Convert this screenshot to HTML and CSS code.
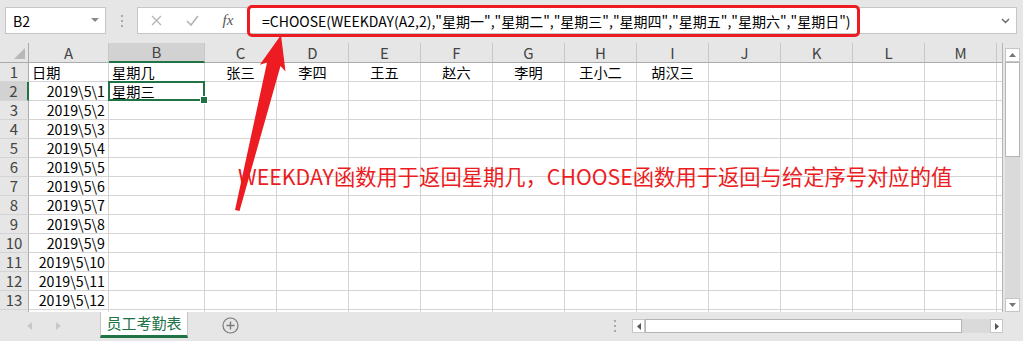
FILE: index.html
```html
<!DOCTYPE html>
<html lang="zh-CN">
<head>
  <meta charset="UTF-8">
  <title>员工考勤表</title>
  <link rel="stylesheet" href="styles.css">
</head>
<body>
  <div class="app">
    <div class="toolbar">
      <div class="name-box">
        <span>B2</span>
        <svg width="8" height="5" viewBox="0 0 8 5"><path d="M0 0h8L4 4z" fill="#8a8a8a"/></svg>
      </div>
      <div class="grip"><i></i><i></i><i></i></div>
      <div class="formula-bar">
        <div class="fx-btn">
          <svg width="11" height="11" viewBox="0 0 11 11"><path d="M1 1l9 9M10 1l-9 9" stroke="#b4b4b4" stroke-width="1.3" fill="none"/></svg>
        </div>
        <div class="fx-btn">
          <svg width="13" height="11" viewBox="0 0 13 11"><path d="M1 6l4 4 7-9" stroke="#b4b4b4" stroke-width="1.6" fill="none"/></svg>
        </div>
        <div class="fx-btn"><span class="fx">fx</span></div>
        <div class="formula-text">=CHOOSE(WEEKDAY(A2,2),"星期一","星期二","星期三","星期四","星期五","星期六","星期日")</div>
        <svg class="chevron" width="9" height="6" viewBox="0 0 9 6"><path d="M1 1l3.5 3.5L8 1" stroke="#666" stroke-width="1.4" fill="none"/></svg>
      </div>
    </div>

    <div class="main">
      <div class="sheet">
        <table class="grid">
          <colgroup>
            <col class="c-head"><col class="c-a"><col class="c-b">
            <col><col><col><col><col><col><col><col><col><col><col><col>
          </colgroup>
          <tr class="col-heads">
            <th class="corner"></th>
            <th>A</th><th class="sel-col">B</th><th>C</th><th>D</th><th>E</th><th>F</th><th>G</th>
            <th>H</th><th>I</th><th>J</th><th>K</th><th>L</th><th>M</th><th></th>
          </tr>
          <tr>
            <th>1</th><td class="left">日期</td><td class="left">星期几</td>
            <td>张三</td><td>李四</td><td>王五</td><td>赵六</td><td>李明</td><td>王小二</td><td>胡汉三</td>
            <td></td><td></td><td></td><td></td><td></td>
          </tr>
          <tr>
            <th class="sel-row">2</th><td class="num">2019\5\1</td><td class="left active">星期三</td>
            <td></td><td></td><td></td><td></td><td></td><td></td><td></td><td></td><td></td><td></td><td></td><td></td>
          </tr>
          <tr><th>3</th><td class="num">2019\5\2</td><td></td><td></td><td></td><td></td><td></td><td></td><td></td><td></td><td></td><td></td><td></td><td></td><td></td></tr>
          <tr><th>4</th><td class="num">2019\5\3</td><td></td><td></td><td></td><td></td><td></td><td></td><td></td><td></td><td></td><td></td><td></td><td></td><td></td></tr>
          <tr><th>5</th><td class="num">2019\5\4</td><td></td><td></td><td></td><td></td><td></td><td></td><td></td><td></td><td></td><td></td><td></td><td></td><td></td></tr>
          <tr><th>6</th><td class="num">2019\5\5</td><td></td><td></td><td></td><td></td><td></td><td></td><td></td><td></td><td></td><td></td><td></td><td></td><td></td></tr>
          <tr><th>7</th><td class="num">2019\5\6</td><td></td><td></td><td></td><td></td><td></td><td></td><td></td><td></td><td></td><td></td><td></td><td></td><td></td></tr>
          <tr><th>8</th><td class="num">2019\5\7</td><td></td><td></td><td></td><td></td><td></td><td></td><td></td><td></td><td></td><td></td><td></td><td></td><td></td></tr>
          <tr><th>9</th><td class="num">2019\5\8</td><td></td><td></td><td></td><td></td><td></td><td></td><td></td><td></td><td></td><td></td><td></td><td></td><td></td></tr>
          <tr><th>10</th><td class="num">2019\5\9</td><td></td><td></td><td></td><td></td><td></td><td></td><td></td><td></td><td></td><td></td><td></td><td></td><td></td></tr>
          <tr><th>11</th><td class="num">2019\5\10</td><td></td><td></td><td></td><td></td><td></td><td></td><td></td><td></td><td></td><td></td><td></td><td></td><td></td></tr>
          <tr><th>12</th><td class="num">2019\5\11</td><td></td><td></td><td></td><td></td><td></td><td></td><td></td><td></td><td></td><td></td><td></td><td></td><td></td></tr>
          <tr><th>13</th><td class="num">2019\5\12</td><td></td><td></td><td></td><td></td><td></td><td></td><td></td><td></td><td></td><td></td><td></td><td></td><td></td></tr>
          <tr><th></th><td></td><td></td><td></td><td></td><td></td><td></td><td></td><td></td><td></td><td></td><td></td><td></td><td></td><td></td></tr>
        </table>
      </div>
      <div class="vscroll">
        <div class="sb-btn"><svg width="7" height="4" viewBox="0 0 7 4"><path d="M0 4h7L3.5 0z" fill="#777"/></svg></div>
        <div class="sb-thumb"></div>
        <div class="sb-track"></div>
        <div class="sb-btn"><svg width="7" height="4" viewBox="0 0 7 4"><path d="M0 0h7L3.5 4z" fill="#777"/></svg></div>
      </div>
    </div>

    <div class="tabbar">
      <div class="tab-nav">
        <svg width="5" height="8" viewBox="0 0 5 8"><path d="M5 0v8L0 4z" fill="#c8c8c8"/></svg>
        <svg width="5" height="8" viewBox="0 0 5 8"><path d="M0 0v8l5-4z" fill="#c8c8c8"/></svg>
      </div>
      <div class="tab">员工考勤表</div>
      <div class="add-sheet">
        <svg width="17" height="17" viewBox="0 0 17 17"><circle cx="8.5" cy="8.5" r="7.5" fill="none" stroke="#7a7a7a" stroke-width="1.2"/><path d="M8.5 4.5v8M4.5 8.5h8" stroke="#7a7a7a" stroke-width="1.4"/></svg>
      </div>
      <div class="grip grip-bottom"><i></i><i></i><i></i></div>
      <div class="hscroll">
        <div class="sb-btn"><svg width="4" height="7" viewBox="0 0 4 7"><path d="M4 0v7L0 3.5z" fill="#555"/></svg></div>
        <div class="sb-thumb"></div>
        <div class="sb-track"></div>
        <div class="sb-btn"><svg width="4" height="7" viewBox="0 0 4 7"><path d="M0 0v7l4-3.5z" fill="#555"/></svg></div>
      </div>
    </div>

    <!-- annotations drawn on top of the screenshot -->
    <div class="mark-box"></div>
    <svg class="mark-arrow" width="1023" height="341" viewBox="0 0 1023 341">
      <polygon points="281,35 285.5,71.5 280.5,66 239.5,211 235,210 267,62.5 259.8,64.8" fill="#ec1c22"/>
    </svg>
    <p class="mark-note">WEEKDAY函数用于返回星期几，CHOOSE函数用于返回与给定序号对应的值</p>
  </div>
</body>
</html>
```

FILE: styles.css
```css
:root {
  --green: #217346;
  --red: #ec1c22;
  --line: #d4d4d4;
  --head: #e6e6e6;
  --head-sel: #d2d2d2;
  --border: #c6c6c6;
  --font: "Noto Sans CJK SC", "Noto Sans", sans-serif;
}

* {
  box-sizing: border-box;
}

body {
  margin: 0;
  background: #e6e6e6;
  font-family: var(--font);
  color: #000;
}

.app {
  position: relative;
  width: 1023px;
  height: 341px;
  overflow: hidden;
  background: #e6e6e6;
}

/* formula bar row */
.toolbar {
  height: 43px;
  display: flex;
  align-items: flex-start;
  padding: 7px 6px 0 5px;
}

.name-box {
  width: 101px;
  height: 27px;
  background: #fff;
  border: 1px solid var(--border);
  display: flex;
  align-items: center;
  justify-content: space-between;
  padding: 0 6px 0 7px;
  font-size: 14px;
  line-height: 1;
}

.grip {
  width: 31px;
  height: 27px;
  display: flex;
  flex-direction: column;
  align-items: center;
  justify-content: center;
  gap: 3px;
}

.grip i {
  width: 2px;
  height: 2px;
  background: #a8a8a8;
}

.formula-bar {
  flex: 1;
  height: 27px;
  background: #fff;
  border: 1px solid var(--border);
  display: flex;
  align-items: center;
}

.fx-btn {
  width: 36px;
  display: flex;
  justify-content: center;
  align-items: center;
}

.fx {
  font-family: "Liberation Serif", serif;
  font-style: italic;
  font-size: 15px;
  color: #555;
}

.formula-text {
  flex: 1;
  padding-left: 16px;
  font-size: 14px;
  white-space: nowrap;
}

.chevron {
  margin-right: 6px;
}

/* sheet */
.main {
  height: 269px;
  display: flex;
}

.sheet {
  width: 1003px;
  height: 269px;
  overflow: hidden;
  border-right: 1px solid #b4b4b4;
  background: #fff;
}

.grid {
  table-layout: fixed;
  border-collapse: separate;
  border-spacing: 0;
  width: 1069px;
  font-size: 14.2px;
}

.grid col {
  width: 72px;
}

.grid col.c-head {
  width: 29px;
}

.grid col.c-a {
  width: 80px;
}

.grid col.c-b {
  width: 96px;
}

.grid td,
.grid th {
  height: 19px;
  padding: 0 3px;
  border-right: 1px solid var(--line);
  border-bottom: 1px solid var(--line);
  line-height: 18px;
  white-space: nowrap;
  text-align: center;
}

.grid th {
  background: var(--head);
  font-weight: normal;
  font-size: 15px;
  color: #444;
  padding: 0;
  border-right-color: #ababab;
}

.col-heads th {
  height: 20px;
  line-height: 19px;
  border-right-color: #c8c8c8;
  border-bottom-color: #ababab;
}

.col-heads th.corner {
  position: relative;
  border-right-color: #ababab;
}

.corner::after {
  content: "";
  position: absolute;
  right: 3px;
  bottom: 3px;
  border-left: 11px solid transparent;
  border-bottom: 11px solid #b8b8b8;
}

.grid th.sel-col {
  background: var(--head-sel);
  border-bottom: 2px solid var(--green);
  line-height: 18px;
}

.grid th.sel-row {
  background: var(--head-sel);
  border-right: 2px solid var(--green);
}

.grid td.left {
  text-align: left;
}

.grid td.num {
  text-align: right;
}

.grid td.active {
  position: relative;
}

.active::before {
  content: "";
  position: absolute;
  left: -1px;
  top: -1px;
  right: -1px;
  bottom: -1px;
  border: 2px solid var(--green);
}

.active::after {
  content: "";
  position: absolute;
  right: -4px;
  bottom: -4px;
  width: 6px;
  height: 6px;
  background: var(--green);
  border: 1px solid #fff;
}

/* scrollbars */
.vscroll {
  width: 20px;
  padding: 5px 3px 0 2px;
  display: flex;
  flex-direction: column;
}

.sb-btn {
  flex: none;
  width: 15px;
  height: 14px;
  background: #fff;
  border: 1px solid var(--border);
  display: flex;
  align-items: center;
  justify-content: center;
}

.vscroll .sb-thumb {
  height: 95px;
  background: #fff;
  border: 1px solid #b4b4b4;
}

.sb-track {
  flex: 1;
  background: #dadada;
}

.tabbar {
  height: 29px;
  display: flex;
  align-items: flex-start;
  padding-right: 20px;
}

.tab-nav {
  width: 100px;
  height: 27px;
  display: flex;
  align-items: center;
  gap: 24px;
  padding-left: 27px;
}

.tab {
  width: 88px;
  height: 26px;
  background: #fff;
  border: 1px solid var(--border);
  border-top: none;
  border-bottom: 3px solid var(--green);
  color: var(--green);
  font-size: 15px;
  line-height: 22px;
  text-align: center;
}

.add-sheet {
  margin-left: 34px;
  height: 27px;
  display: flex;
  align-items: center;
}

.grip-bottom {
  margin-left: auto;
  width: 16px;
  height: 27px;
}

.hscroll {
  margin-left: 9px;
  margin-top: 7px;
  width: 371px;
  height: 14px;
  display: flex;
}

.hscroll .sb-btn {
  width: 13px;
}

.hscroll .sb-thumb {
  width: 317px;
  background: #fff;
  border: 1px solid #b4b4b4;
}

/* annotations */
.mark-box {
  position: absolute;
  left: 247px;
  top: 5px;
  width: 613px;
  height: 32px;
  border: 3px solid var(--red);
  border-radius: 5px;
}

.mark-arrow {
  position: absolute;
  left: 0;
  top: 0;
  pointer-events: none;
}

.mark-note {
  position: absolute;
  left: 238px;
  top: 162px;
  margin: 0;
  font-size: 21.3px;
  line-height: 28px;
  color: var(--red);
  white-space: nowrap;
}
```
